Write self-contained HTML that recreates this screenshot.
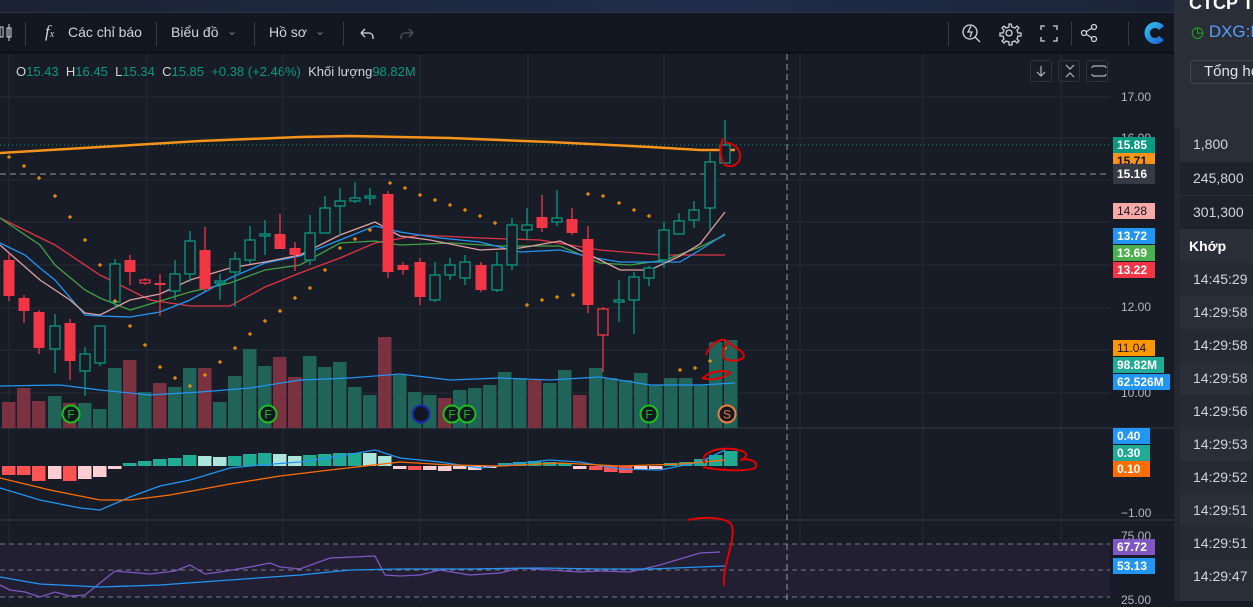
<!DOCTYPE html>
<html><head><meta charset="utf-8">
<style>
*{margin:0;padding:0;box-sizing:border-box}
body{width:1253px;height:601px;overflow:hidden;background:#181c27;font-family:"Liberation Sans","Noto Sans CJK SC",sans-serif;position:relative}
.top{position:absolute;left:0;top:0;width:1175px;height:12px;background:linear-gradient(90deg,#1b2234,#1f2d4a 60%,#1b2438)}
.tb{position:absolute;left:0;top:12px;width:1175px;height:39px;background:#131722;border-top:1px solid #2f3341;color:#d1d4dc;font-size:14px}
.tb span{position:absolute;top:11px}
.sep{position:absolute;top:9px;width:1px;height:24px;background:#363a45}
.gap{position:absolute;left:0;top:51px;width:1175px;height:3px;background:#0f121a}
.leg{position:absolute;left:16px;top:64px;font-size:13px;color:#d1d4dc;white-space:nowrap}
.leg b{font-weight:normal;color:#089981}
.rp{position:absolute;left:1174px;top:0;width:79px;height:601px;background:#252833;color:#d1d4dc;font-size:14px;overflow:hidden;white-space:nowrap}
.row{position:absolute;left:6px;width:73px;height:33px;padding-left:13px;line-height:33px}
.btn{position:absolute;top:60px;width:22px;height:22px;border:1px solid #2f3341;border-radius:3px}
.lab{position:absolute;left:1113px;height:16px;font-size:12px;line-height:16px;padding-left:4px;color:#fff;font-weight:bold}
.ax{position:absolute;left:1121px;font-size:12px;color:#b2b5be}
</style></head><body>
<div class="top"></div>
<div class="tb">
 <svg style="position:absolute;left:0;top:10px" width="14" height="20"><rect x="0" y="4" width="3" height="10" fill="none" stroke="#d1d4dc"/><rect x="7" y="5" width="4" height="9" fill="none" stroke="#d1d4dc"/><line x1="9" y1="1" x2="9" y2="18" stroke="#d1d4dc"/></svg>
 <div class="sep" style="left:25px"></div>
 <span style="left:45px;top:9px;font-family:'Liberation Serif',serif;font-style:italic;font-size:17px">f<small style="font-size:10px">x</small></span>
 <span style="left:68px">Các chỉ báo</span>
 <div class="sep" style="left:156px"></div>
 <span style="left:171px">Biểu đồ</span><span style="left:227px;color:#787b86;font-size:12px">&#8964;</span>
 <div class="sep" style="left:254px"></div>
 <span style="left:269px">Hồ sơ</span><span style="left:315px;color:#787b86;font-size:12px">&#8964;</span>
 <div class="sep" style="left:343px"></div>
 <svg style="position:absolute;left:357px;top:12px" width="60" height="16"><path d="M4 8h8a4 4 0 0 1 4 4v2M4 8l4-4M4 8l4 4" fill="none" stroke="#d1d4dc" stroke-width="1.3"/><path d="M56 8h-8a4 4 0 0 0-4 4v2M56 8l-4-4M56 8l-4 4" fill="none" stroke="#50535e" stroke-width="1.3"/></svg>
 <div class="sep" style="left:948px"></div>
 <svg style="position:absolute;left:960px;top:7px" width="210" height="26" fill="none" stroke="#d1d4dc" stroke-width="1.3">
  <circle cx="10" cy="12" r="7"/><path d="M15 17l5 5M11 6l-3 6h4l-2 5"/>
  <circle cx="49" cy="13" r="3"/><path d="M49 4l2 0 1 3 3 1 2-2 2 2-2 2 1 3 3 0 0 3-3 0-1 3 2 2-2 2-2-2-3 1 0 3-3 0 0-3-3-1-2 2-2-2 2-2-1-3-3 0 0-3 3 0 1-3-2-2 2-2 2 2 3-1z"/>
  <path d="M81 10V6h4M93 6h4v4M97 17v4h-4M85 21h-4v-4"/>
  <circle cx="134" cy="7" r="2.5"/><circle cx="134" cy="19" r="2.5"/><circle cx="124" cy="13" r="2.5"/><path d="M126 12l6-4M126 14l6 4"/>
 </svg>
 <div class="sep" style="left:1071px"></div>
 <div class="sep" style="left:1128px"></div>
 <svg style="position:absolute;left:1142px;top:7px" width="26" height="26"><defs><linearGradient id="lg" x1="0" y1="0" x2="1" y2="1"><stop offset="0" stop-color="#38c8f0"/><stop offset="1" stop-color="#1a5fd0"/></linearGradient></defs><path d="M22 6A11 11 0 1 0 22 20L17 16A5 5 0 1 1 17 10Z" fill="url(#lg)"/></svg>
</div>
<div class="gap"></div>
<div class="leg">O<b>15.43</b> &nbsp;H<b>16.45</b> &nbsp;L<b>15.34</b> &nbsp;C<b>15.85</b> &nbsp;<b>+0.38 (+2.46%)</b> &nbsp;Khối lượng<b>98.82M</b></div>
<div class="btn" style="left:1030px"></div><div class="btn" style="left:1058px"></div><div class="btn" style="left:1086px"></div>
<svg style="position:absolute;left:1030px;top:60px" width="80" height="22" fill="none" stroke="#b2b5be" stroke-width="1.2"><path d="M11 6v10M7 12l4 4 4-4M36 5l4 4 4-4M36 17l4-4 4 4M62 8a2 2 0 0 1 2-2h10a2 2 0 0 1 2 2M62 14a2 2 0 0 0 2 2h10a2 2 0 0 0 2-2"/></svg>
<svg id="ch" style="position:absolute;left:0;top:54px" width="1174" height="547" viewBox="0 54 1174 547"></svg>
<div class="ax" style="top:90px">17.00</div>
<div class="ax" style="top:131px">16.00</div>
<div class="ax" style="top:300px">12.00</div>
<div class="ax" style="top:386px">10.00</div>
<div class="ax" style="top:506px">−1.00</div>
<div class="ax" style="top:529px">75.00</div>
<div class="ax" style="top:593px">25.00</div>
<div class="lab" style="top:137px;width:42px;background:#089981">15.85</div>
<div class="lab" style="top:153px;width:42px;background:#f7931a;color:#131722;height:11px;overflow:hidden">15.71</div>
<div class="lab" style="top:164px;width:42px;background:#363a45;height:20px;line-height:20px">15.16</div>
<div class="lab" style="top:203px;width:42px;background:#f7a9a8;color:#131722;font-weight:normal">14.28</div>
<div class="lab" style="top:228px;width:42px;background:#2196f3">13.72</div>
<div class="lab" style="top:245px;width:42px;background:#4caf50">13.69</div>
<div class="lab" style="top:262px;width:42px;background:#f23645">13.22</div>
<div class="lab" style="top:340px;width:42px;background:#ff9800;color:#131722;font-weight:normal">11.04</div>
<div class="lab" style="top:357px;width:51px;background:#22ab94">98.82M</div>
<div class="lab" style="top:374px;width:57px;background:#2196f3">62.526M</div>
<div class="lab" style="top:428px;width:37px;background:#2196f3">0.40</div>
<div class="lab" style="top:445px;width:37px;background:#22ab94">0.30</div>
<div class="lab" style="top:461px;width:37px;background:#ff6d00">0.10</div>
<div class="lab" style="top:539px;width:42px;background:#7e57c2">67.72</div>
<div class="lab" style="top:558px;width:42px;background:#2196f3">53.13</div>
<div class="rp">
 <div style="position:absolute;left:0;top:0;width:79px;height:128px;background:#2a2e39"></div>
 <div style="position:absolute;left:15px;top:-7px;font-weight:bold;font-size:18px;color:#fff">CTCP Tậ</div>
 <div style="position:absolute;left:17px;top:22px;font-size:17px;color:#5b9cf6"><span style="color:#1cbf1c;font-size:15px">◷</span> DXG:H</div>
 <div style="position:absolute;left:16px;top:60px;width:80px;height:24px;border:1px solid #434651;border-radius:3px;padding-left:13px;line-height:22px;color:#e0e3eb;font-size:15px">Tổng hợ</div>
 <div style="position:absolute;left:6px;top:128px;width:73px;height:473px;background:#2a2e39"></div>
 <div class="row" style="top:128px;background:#2a2e39">1,800</div>
 <div class="row" style="top:162px;background:#1e222d">245,800</div>
 <div class="row" style="top:196px;background:#1e222d">301,300</div>
 <div class="row" style="top:230px;background:#2a2e39;font-weight:bold;color:#fff;padding-left:9px">Khớp</div>
 <div class="row" style="top:263px;background:#262a35">14:45:29</div>
 <div class="row" style="top:296px">14:29:58</div>
 <div class="row" style="top:329px;background:#262a35">14:29:58</div>
 <div class="row" style="top:362px">14:29:58</div>
 <div class="row" style="top:395px;background:#262a35">14:29:56</div>
 <div class="row" style="top:428px">14:29:53</div>
 <div class="row" style="top:461px;background:#262a35">14:29:52</div>
 <div class="row" style="top:494px">14:29:51</div>
 <div class="row" style="top:527px;background:#262a35">14:29:51</div>
 <div class="row" style="top:560px">14:29:47</div>
</div>
<script>
var s='';
function L(x1,y1,x2,y2,c,w,d){s+='<line x1="'+x1+'" y1="'+y1+'" x2="'+x2+'" y2="'+y2+'" stroke="'+c+'" stroke-width="'+(w||1)+'"'+(d?' stroke-dasharray="'+d+'"':'')+'/>';}
function P(pts,c,w){s+='<polyline fill="none" stroke="'+c+'" stroke-width="'+(w||1.3)+'" points="'+pts.map(function(p){return p.join(',')}).join(' ')+'"/>';}
var g='#262a36';
[97,138,180,222,265,308,350,393].forEach(function(y){L(0,y,1110,y,g)});
[9,147,283,420,528,664,800,923,1061].forEach(function(x){L(x,54,x,601,g)});
L(0,428,1174,428,'#363a45');L(0,520,1174,520,'#363a45');
s+='<rect x="0" y="544" width="1110" height="53" fill="#221f33"/>';
[544,570,597].forEach(function(y){L(0,y,1110,y,'#787b86',1,'5 4')});
L(0,145,1110,145,'#089981',1,'1 3');
L(0,174,1110,174,'#9598a1',1,'6 4');L(787,54,787,601,'#9598a1',1,'6 4');
var V=[[9,402,0],[24,388,0],[39,401,0],[55,396,1],[70,403,0],[85,403,1],[100,409,1],[115,368,1],[130,360,0],[145,392,1],[160,383,0],[175,387,1],[190,368,1],[205,368,0],[220,402,1],[235,376,1],[250,349,1],[265,366,1],[280,357,0],[295,377,0],[310,356,1],[325,367,1],[340,362,1],[355,387,1],[370,395,1],[385,337,0],[400,375,1],[415,392,1],[430,395,1],[445,398,0],[460,390,1],[475,388,1],[490,385,1],[505,372,1],[520,378,1],[535,380,0],[550,383,1],[565,370,1],[580,395,0],[596,368,1],[611,378,1],[626,380,1],[641,373,1],[656,385,1],[671,378,1],[686,378,1],[701,385,1],[716,342,1],[731,340,1]];
V.forEach(function(v){s+='<rect x="'+(v[0]-7)+'" y="'+v[1]+'" width="13.5" height="'+(428-v[1])+'" fill="'+(v[2]?'#1f6359':'#7a3140')+'"/>'});
P([[0,386],[60,385],[100,390],[150,395],[200,392],[250,388],[300,380],[350,378],[400,374],[450,380],[500,378],[550,380],[600,377],[650,385],[700,385],[735,383]],'#2196f3',1.2);
P([[0,153],[100,147],[200,141],[300,137],[350,136],[450,138],[550,142],[650,147],[700,150],[735,150]],'#f7931a',2.5);
P([[0,218],[55,245],[100,275],[150,300],[190,306],[230,306],[265,287],[300,273],[340,258],[375,243],[420,235],[480,238],[540,240],[600,250],[660,255],[725,255]],'#e03444');
P([[0,218],[40,245],[55,265],[85,290],[100,298],[130,310],[190,292],[230,283],[265,270],[300,265],[340,243],[375,241],[400,245],[450,243],[500,246],[560,246],[600,263],[630,265],[665,260],[700,247],[725,235]],'#43a047');
P([[0,243],[25,255],[40,268],[55,280],[85,315],[100,316],[130,317],[160,312],[190,300],[230,278],[265,263],[300,256],[340,240],[375,226],[400,232],[440,238],[480,242],[520,252],[560,250],[590,257],[620,262],[650,262],[680,262],[700,250],[725,234]],'#2196f3');
P([[0,245],[40,280],[70,300],[85,313],[100,315],[130,300],[160,294],[190,280],[230,268],[265,262],[300,255],[340,235],[375,222],[400,236],[430,240],[480,250],[520,248],[560,241],[590,255],[620,270],[650,270],[680,256],[700,244],[725,212]],'#e0a0a0');
var C=[[9,260,296,253,301,0],[24,298,311,295,323,0],[39,312,348,310,354,0],[55,326,349,314,373,1],[70,323,361,319,380,0],[85,354,371,347,396,1],[100,326,363,326,366,1],[115,264,302,259,309,1],[130,260,272,255,285,0],[145,280,283,278,285,2],[160,283,285,274,316,0],[175,274,291,260,300,1],[190,241,274,231,282,1],[205,250,289,227,291,0],[220,281,283,274,300,1],[235,259,272,252,307,1],[250,240,260,226,264,1],[265,234,235,220,255,1],[280,234,249,214,249,0],[295,248,255,242,271,0],[310,233,260,215,265,1],[325,208,233,196,233,1],[340,201,206,188,236,1],[355,198,201,182,203,1],[370,196,197,188,205,1],[388,194,272,191,278,0],[403,265,270,262,275,0],[420,262,297,258,305,0],[435,275,300,262,302,1],[450,265,275,258,280,1],[465,262,278,255,285,1],[481,265,290,262,292,0],[497,265,290,252,292,1],[512,225,265,218,270,1],[527,225,230,208,240,1],[542,217,228,195,232,0],[557,218,222,190,226,1],[572,219,233,208,235,0],[588,239,305,226,313,0],[603,309,335,307,372,2],[619,300,302,280,322,1],[634,277,300,272,334,1],[649,268,278,266,286,1],[664,230,260,222,268,1],[679,221,234,213,234,1],[694,210,220,201,228,1],[710,162,208,152,230,1],[725,145,163,120,165,1]];
C.forEach(function(c){var col=c[5]==1?'#089981':'#f23645';L(c[0],c[3],c[0],c[4],col,1.3);
 if(c[5]==0)s+='<rect x="'+(c[0]-5.5)+'" y="'+c[1]+'" width="11" height="'+Math.max(2,c[2]-c[1])+'" fill="'+col+'"/>';
 else s+='<rect x="'+(c[0]-5)+'" y="'+c[1]+'" width="10" height="'+Math.max(2,c[2]-c[1])+'" fill="#181c27" stroke="'+col+'" stroke-width="1.3"/>';});
var S=[[9,157],[24,166],[39,178],[55,196],[70,217],[85,240],[100,265],[115,301],[130,326],[145,345],[160,367],[175,378],[190,386],[205,375],[220,362],[235,348],[250,334],[265,321],[280,311],[295,298],[310,288],[325,270],[340,248],[355,239],[370,230],[390,183],[405,188],[420,195],[435,200],[450,205],[465,210],[480,216],[495,223],[527,305],[542,300],[557,297],[573,295],[588,194],[603,196],[619,203],[634,210],[649,216],[680,370],[695,368],[710,361],[725,348]];
S.forEach(function(p){s+='<path d="M'+(p[0]-2)+' '+p[1]+'h4M'+p[0]+' '+(p[1]-2)+'v4" stroke="#ff9800" stroke-width="1.2"/>'});
[[71,'F','#1cbf1c'],[268,'F','#1cbf1c'],[452,'F','#1cbf1c'],[467,'F','#1cbf1c'],[649,'F','#1cbf1c'],[421,'','#1a2bb0'],[727,'S','#f07c3c']].forEach(function(m){s+='<circle cx="'+m[0]+'" cy="414" r="8.5" fill="#131722" stroke="'+m[2]+'" stroke-width="2"/><text x="'+m[0]+'" y="418.5" font-size="12" text-anchor="middle" fill="'+m[2]+'" font-family="Liberation Sans">'+m[1]+'</text>'});
var H=[[9,475,0],[24,475,0],[39,481,0],[55,479,2],[70,481,0],[85,479,2],[100,477,2],[115,469,2],[130,463,1],[145,461,1],[160,459,1],[175,458,1],[190,455,1],[205,456,3],[220,457,3],[235,456,1],[250,454,1],[265,453,1],[280,454,3],[295,456,3],[310,455,1],[325,454,1],[340,453,1],[355,453,1],[370,453,3],[385,456,3],[400,469,2],[415,470,0],[430,470,2],[445,471,2],[460,469,2],[475,470,2],[490,468,2],[505,463,1],[520,462,1],[535,461,1],[550,462,1],[565,463,1],[580,469,2],[596,470,0],[611,472,0],[626,473,0],[641,470,2],[656,469,2],[671,463,1],[686,462,1],[701,459,1],[716,455,1],[731,451,1]];
var hc=['#ff5252','#22ab94','#ffcdd2','#ace5dc'];
H.forEach(function(h){var y=Math.min(h[1],466),hh=Math.abs(h[1]-466);s+='<rect x="'+(h[0]-7)+'" y="'+y+'" width="13.5" height="'+Math.max(1,hh)+'" fill="'+hc[h[2]]+'"/>'});
P([[0,488],[40,500],[80,508],[100,510],[130,497],[160,486],[190,480],[230,468],[260,465],[300,462],[340,456],[375,450],[400,458],[440,462],[480,468],[520,463],[550,460],[580,462],[620,469],[660,470],[700,462],[725,450]],'#2196f3');
P([[0,478],[50,490],[100,500],[130,500],[170,495],[230,484],[280,476],[330,470],[400,462],[450,465],[500,466],[560,463],[620,466],[680,464],[725,460]],'#ff6d00');
P([[0,585],[10,590],[25,592],[40,597],[55,592],[70,596],[85,595],[100,583],[115,571],[150,574],[175,571],[190,565],[205,574],[220,572],[250,567],[270,563],[280,567],[300,569],[330,558],[375,556],[385,575],[400,576],[420,575],[440,570],[470,575],[500,573],[520,568],[550,570],[580,572],[600,571],[630,572],[660,565],[700,553],[720,552]],'#7e57c2');
P([[0,577],[40,584],[100,587],[160,585],[230,580],[300,575],[350,570],[400,569],[470,569],[540,568],[600,569],[650,569],[700,567],[725,566]],'#2196f3');
var r='fill="none" stroke="#e00000" stroke-width="2"';
s+='<path '+r+' d="M723 138c-3 8-4 20 2 27 6 3 14 0 15-8 1-10-8-13-15-15"/>';
s+='<path '+r+' d="M706 355c4-12 18-20 23-12 8 6 18 10 14 15-6 4-16 3-19 0-2-5 0-12 4-15M703 378c8-8 24-8 27-5-5 5-20 8-27 5z"/>';
s+='<path '+r+' d="M705 463c-6-8 8-16 28-14 14 2 16 6 10 10M740 460c10-2 20 2 15 8-10 4-40 2-52-1"/>';
s+='<path '+r+' d="M688 520c14-3 40-4 44 6 4 14-10 40-8 60"/>';
document.getElementById('ch').innerHTML=s;
</script>
</body></html>
